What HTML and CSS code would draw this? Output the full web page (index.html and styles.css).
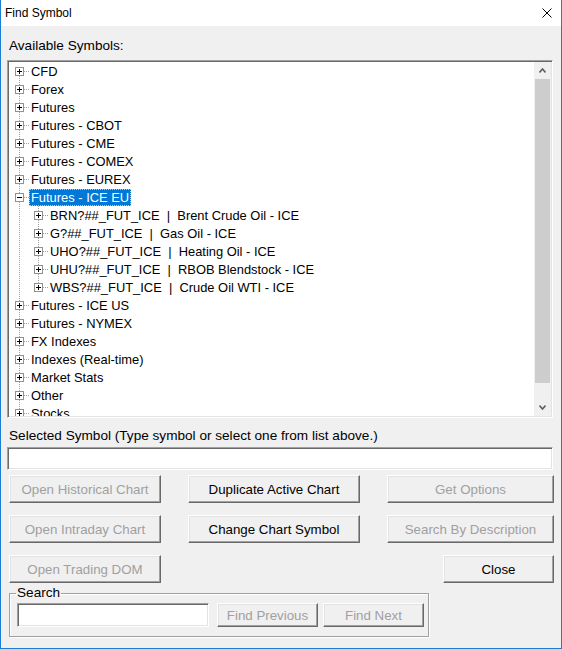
FILE: index.html
```html
<!DOCTYPE html>
<html lang="en">
<head>
    <meta charset="UTF-8">
    <title>Find Symbol</title>
    <link rel="stylesheet" href="styles.css">
</head>
<body>
    <!-- tree connector pieces: dotted lines + expander boxes -->
    <svg class="defs" width="0" height="0">
        <symbol id="root-plus-first" viewBox="0 0 19 18">
            <path class="dots" d="M9.5 14V18M14 9.5H19"/>
            <rect class="box" x="5.5" y="5.5" width="8" height="8"/>
            <path class="sign" d="M7 9.5H12M9.5 7V12"/>
        </symbol>
        <symbol id="root-plus" viewBox="0 0 19 18">
            <path class="dots" d="M9.5 0V5M9.5 14V18M14 9.5H19"/>
            <rect class="box" x="5.5" y="5.5" width="8" height="8"/>
            <path class="sign" d="M7 9.5H12M9.5 7V12"/>
        </symbol>
        <symbol id="root-minus" viewBox="0 0 19 18">
            <path class="dots" d="M9.5 0V5M9.5 14V18M14 9.5H19"/>
            <rect class="box" x="5.5" y="5.5" width="8" height="8"/>
            <path class="sign" d="M7 9.5H12"/>
        </symbol>
        <symbol id="child-plus" viewBox="0 0 38 18">
            <path class="dots" d="M9.5 0V18M28.5 0V5M28.5 14V18M33 9.5H38"/>
            <rect class="box" x="24.5" y="5.5" width="8" height="8"/>
            <path class="sign" d="M26 9.5H31M28.5 7V12"/>
        </symbol>
        <symbol id="child-plus-last" viewBox="0 0 38 18">
            <path class="dots" d="M9.5 0V18M28.5 0V5M33 9.5H38"/>
            <rect class="box" x="24.5" y="5.5" width="8" height="8"/>
            <path class="sign" d="M26 9.5H31M28.5 7V12"/>
        </symbol>
    </svg>

    <div class="window">
        <div class="titlebar">
            <span class="title">Find Symbol</span>
            <svg class="close-x" width="10" height="10" viewBox="0 0 10 10">
                <path d="M0.5 0.5L9.5 9.5M9.5 0.5L0.5 9.5" stroke="#000" stroke-width="1"/>
            </svg>
        </div>

        <div class="content">
            <div class="field-label first">Available Symbols:</div>

            <div class="tree">
                <ul class="tree-list">
                    <li class="row"><svg class="twig"><use href="#root-plus-first"/></svg><span class="item">CFD</span></li>
                    <li class="row"><svg class="twig"><use href="#root-plus"/></svg><span class="item">Forex</span></li>
                    <li class="row"><svg class="twig"><use href="#root-plus"/></svg><span class="item">Futures</span></li>
                    <li class="row"><svg class="twig"><use href="#root-plus"/></svg><span class="item">Futures - CBOT</span></li>
                    <li class="row"><svg class="twig"><use href="#root-plus"/></svg><span class="item">Futures - CME</span></li>
                    <li class="row"><svg class="twig"><use href="#root-plus"/></svg><span class="item">Futures - COMEX</span></li>
                    <li class="row"><svg class="twig"><use href="#root-plus"/></svg><span class="item">Futures - EUREX</span></li>
                    <li class="row"><svg class="twig"><use href="#root-minus"/></svg><span class="item selected">Futures - ICE EU</span></li>
                    <li class="row"><svg class="twig wide"><use href="#child-plus"/></svg><span class="item">BRN?##_FUT_ICE  |  Brent Crude Oil - ICE</span></li>
                    <li class="row"><svg class="twig wide"><use href="#child-plus"/></svg><span class="item">G?##_FUT_ICE  |  Gas Oil - ICE</span></li>
                    <li class="row"><svg class="twig wide"><use href="#child-plus"/></svg><span class="item">UHO?##_FUT_ICE  |  Heating Oil - ICE</span></li>
                    <li class="row"><svg class="twig wide"><use href="#child-plus"/></svg><span class="item">UHU?##_FUT_ICE  |  RBOB Blendstock - ICE</span></li>
                    <li class="row"><svg class="twig wide"><use href="#child-plus-last"/></svg><span class="item">WBS?##_FUT_ICE  |  Crude Oil WTI - ICE</span></li>
                    <li class="row"><svg class="twig"><use href="#root-plus"/></svg><span class="item">Futures - ICE US</span></li>
                    <li class="row"><svg class="twig"><use href="#root-plus"/></svg><span class="item">Futures - NYMEX</span></li>
                    <li class="row"><svg class="twig"><use href="#root-plus"/></svg><span class="item">FX Indexes</span></li>
                    <li class="row"><svg class="twig"><use href="#root-plus"/></svg><span class="item">Indexes (Real-time)</span></li>
                    <li class="row"><svg class="twig"><use href="#root-plus"/></svg><span class="item">Market Stats</span></li>
                    <li class="row"><svg class="twig"><use href="#root-plus"/></svg><span class="item">Other</span></li>
                    <li class="row"><svg class="twig"><use href="#root-plus"/></svg><span class="item">Stocks</span></li>
                </ul>
                <div class="scroll">
                    <div class="arrow">
                        <svg width="7" height="5" viewBox="0 0 7 5"><path d="M0.5 4.5L3.5 1L6.5 4.5" fill="none" stroke="#606060" stroke-width="1.6"/></svg>
                    </div>
                    <div class="track"><div class="thumb"></div></div>
                    <div class="arrow">
                        <svg width="7" height="5" viewBox="0 0 7 5"><path d="M0.5 0.5L3.5 4L6.5 0.5" fill="none" stroke="#606060" stroke-width="1.6"/></svg>
                    </div>
                </div>
            </div>

            <div class="field-label">Selected Symbol (Type symbol or select one from list above.)</div>
            <input type="text" class="edit symbol-input">

            <div class="actions">
                <button disabled>Open Historical Chart</button>
                <button>Duplicate Active Chart</button>
                <button disabled>Get Options</button>
                <button disabled>Open Intraday Chart</button>
                <button>Change Chart Symbol</button>
                <button disabled>Search By Description</button>
                <button disabled>Open Trading DOM</button>
                <button class="btn-close">Close</button>
            </div>

            <fieldset class="search">
                <legend>Search</legend>
                <div class="search-row">
                    <input type="text" class="edit search-input">
                    <button class="btn-find" disabled>Find Previous</button>
                    <button class="btn-find" disabled>Find Next</button>
                </div>
            </fieldset>
        </div>
    </div>
</body>
</html>
```

FILE: styles.css
```css
body {
    margin: 0;
    background-color: #f0f0f0;
    font-family: "Liberation Sans", Arial, sans-serif;
    font-size: 13.3px;
    color: #000;
}
.defs {
    position: absolute;
}
.window {
    width: 562px;
    height: 649px;
    box-sizing: border-box;
    border: 1px solid #1a7fd4;
    border-top: 0;
    background-color: #f0f0f0;
}
.titlebar {
    height: 26px;
    background-color: #fff;
    display: flex;
    align-items: center;
    justify-content: space-between;
    padding: 0 9px 0 4px;
}
.title {
    font-size: 12px;
}
.content {
    padding: 0 8px 0 6px;
}
.field-label {
    height: 16px;
    line-height: 16px;
    font-size: 13.6px;
    margin: 10px 0 0 2px;
}
.field-label.first {
    margin-top: 12px;
}

/* sunken boxes: tree and edit fields */
.tree, .edit {
    border: 1px solid;
    border-color: #a0a0a0 #fff #fff #a0a0a0;
    box-shadow: inset 1px 1px #696969, inset -1px -1px #e3e3e3;
    background-color: #fff;
}
.tree {
    margin-top: 6px;
    height: 358px;
    box-sizing: border-box;
    display: flex;
    padding: 1px;
}
.tree-list {
    flex: 1;
    list-style: none;
    margin: 0;
    padding: 0 0 0 1px;
    overflow: hidden;
    font-size: 12.9px;
}
.row {
    display: flex;
    align-items: center;
    height: 18px;
}
.twig {
    width: 19px;
    height: 18px;
    flex: none;
}
.twig.wide {
    width: 38px;
}
.dots {
    fill: none;
    stroke: #a0a0a0;
    stroke-dasharray: 1 1;
}
.box {
    fill: #fff;
    stroke: #919191;
}
.sign {
    fill: none;
    stroke: #000;
}
.item {
    white-space: pre;
    line-height: 15px;
    padding: 0 1px;
    border: 1px solid transparent;
}
.item.selected {
    background-color: #0078d7;
    color: #fff;
    border: 1px dotted #f6c27a;
}

.scroll {
    width: 17px;
    display: flex;
    flex-direction: column;
    background-color: #f0f0f0;
}
.arrow {
    height: 17px;
    display: flex;
    align-items: center;
    justify-content: center;
}
.track {
    flex: 1;
}
.thumb {
    height: 304px;
    margin: 0 1px;
    background-color: #cdcdcd;
}

.edit {
    display: block;
    margin: 0;
    padding: 0 3px;
    font: inherit;
    outline: none;
}
.symbol-input {
    margin-top: 3px;
    width: 100%;
    height: 23px;
    box-sizing: border-box;
}

/* classic raised buttons */
button {
    font: inherit;
    color: #000;
    padding: 0;
    background-color: #f0f0f0;
    border: 1px solid;
    border-color: #fff #696969 #696969 #fff;
    box-shadow: inset -1px -1px #a0a0a0, inset 1px 1px #e3e3e3;
}
button:disabled {
    color: #a0a0a0;
}
.actions {
    display: grid;
    grid-template-columns: 152px 172px 167px;
    grid-auto-rows: 28px;
    justify-content: space-between;
    row-gap: 12px;
    margin: 5px -1px 0 2px;
}
.btn-close {
    grid-column: 3;
    justify-self: end;
    width: 111px;
}

.search {
    width: 420px;
    box-sizing: border-box;
    margin: 2px 0 0 2px;
    padding: 0 0 9px 7px;
    border: 1px solid #a0a0a0;
    box-shadow: inset 1px 1px #fff, 1px 1px #fff;
}
.search legend {
    padding: 0 1px;
    margin-left: -1px;
    line-height: 16px;
    font-size: 13.6px;
}
.search-row {
    display: flex;
    margin-top: 2px;
}
.search-input {
    width: 192px;
    height: 24px;
    box-sizing: border-box;
}
.btn-find {
    width: 101px;
    height: 24px;
    margin-left: 8px;
}
.btn-find + .btn-find {
    margin-left: 5px;
}
```
